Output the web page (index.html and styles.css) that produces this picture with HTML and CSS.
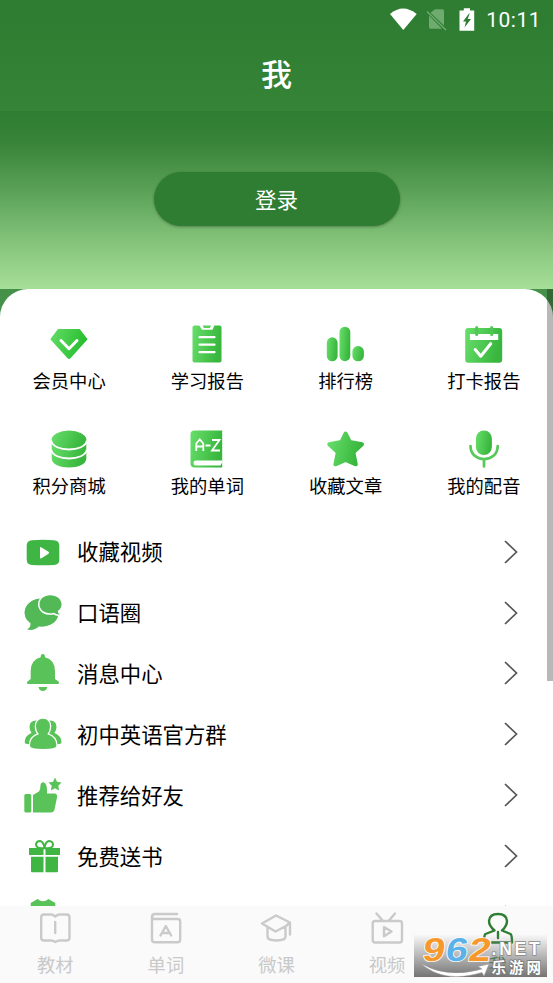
FILE: index.html
```html
<!DOCTYPE html>
<html lang="zh-CN">
<head>
<meta charset="utf-8">
<title>我</title>
<link rel="stylesheet" href="styles.css">
</head>
<body>
<svg class="defs" width="0" height="0" aria-hidden="true">
  <defs>
    <linearGradient id="g" x1="0" y1="0" x2="1" y2="0.25"><stop offset="0" stop-color="#68df6b"/><stop offset="1" stop-color="#38b63d"/></linearGradient>
    <linearGradient id="d" x1="0" y1="0" x2="1" y2="0.25"><stop offset="0" stop-color="#65dd6a"/><stop offset="1" stop-color="#27bd2d"/></linearGradient>
    <linearGradient id="wm" x1="0" y1="0" x2="0" y2="1"><stop offset="0" stop-color="#777" stop-opacity="0"/><stop offset="1" stop-color="#747474"/></linearGradient>
  </defs>
</svg>
<div class="screen">
  <header class="appbar">
    <div class="status">
      <svg width="28" height="24" viewBox="389 6 28 24"><path fill="#fff" d="M390 13Q403 2 416.700 13L403.300 29Z"/></svg>
      <svg class="sim" width="22" height="24" viewBox="426 6 22 24"><path fill="#6fab6f" d="M435 8.300H442.500Q444 8.300 444 10V24.500L430.500 11.800ZM429 14.500L442 27.700H430.500Q429 27.700 429 26Z"/><path stroke="#6fab6f" stroke-width="1.500" d="M427 10.500L446 29"/></svg>
      <svg class="battery" width="16" height="24" viewBox="459.500 6 16 24"><path fill="#fff" d="M460 9.500H464.300V7.300H470.500V9.500H474.700V29.700H460Z"/><path fill="#2e7d32" d="M469.500 12.500L463.500 20.500H466.500L465 26.500L471.500 18H468.200L470.200 12.500Z"/></svg>
      <span class="time">10:11</span>
    </div>
    <h1>我</h1>
  </header>
  <section class="hero"><button class="login">登录</button></section>
  <main class="backdrop">
    <div class="card">
      <div class="grid">
        <div class="cell"><svg viewBox="47.300 322 44 44"><path fill="url(#d)" d="M58.300 329H80L87.900 339.300L71 358Q69.300 360 67.600 358L50.600 339.300Z"/><path class="cut" d="M61.300 340.500L69.300 348.700L77.300 340.500"/></svg><span>会员中心</span></div>
        <div class="cell"><svg viewBox="185.500 322 44 44"><rect x="193" y="325.500" width="29" height="37" rx="2" fill="url(#g)"/><path fill="#fff" d="M199.500 325H215L213 329.800H202.500Z"/><path fill="#5bce5d" d="M203.300 325.500H211.500L210.500 328H204.300Z"/><path class="cut thin" d="M200 337.200H215M200 344.700H215M200 352.200H215"/></svg><span>学习报告</span></div>
        <div class="cell"><svg viewBox="324.200 322 44 44"><rect x="327" y="337.300" width="10.800" height="24" rx="5.400" fill="url(#g)"/><rect x="339.700" y="326.700" width="10.800" height="34.500" rx="5.400" fill="url(#g)"/><rect x="352.600" y="346" width="11.500" height="15.300" rx="5.600" fill="url(#g)"/></svg><span>排行榜</span></div>
        <div class="cell"><svg viewBox="461.800 322 44 44"><rect x="465" y="328" width="37" height="34.700" rx="3" fill="url(#g)"/><rect x="469.700" y="334" width="28.300" height="6" fill="#fff"/><path stroke="#4fc853" stroke-width="3" stroke-linecap="round" d="M476.500 327.500V334.500M491.500 327.500V334.500"/><path class="cut" d="M475 349.500L480.500 356.200L490.500 343.700"/></svg><span>打卡报告</span></div>
        <div class="cell"><svg viewBox="47.300 426.500 44 44"><path fill="url(#g)" d="M52 439V458C52 470 86.600 470 86.600 458V439Z"/><ellipse cx="69.300" cy="439" rx="17.300" ry="9" fill="url(#g)"/><path fill="none" stroke="#fff" stroke-width="1.900" d="M51.500 440C53 452 85.600 452 87.100 440M51.500 449C53 461 85.600 461 87.100 449"/></svg><span>积分商城</span></div>
        <div class="cell"><svg viewBox="185.500 426.500 44 44"><path fill="url(#g)" d="M195 430H222.700V467H195Q191 467 191 463V434Q191 430 195 430Z"/><path fill="#fff" d="M222.700 460H196.500Q194 460 194 462.500T196.500 465H221L222.700 462Z"/><path class="letters" d="M196.800 450.500V443L200.300 438.800L203.800 443V450.500M196.800 446H203.800M206 445H211M212.500 439.500H220L212.500 450H220.500"/></svg><span>我的单词</span></div>
        <div class="cell"><svg viewBox="324 426.500 44 44"><path fill="url(#g)" stroke="url(#g)" stroke-width="4" stroke-linejoin="round" d="M345.600 433L349.800 441.500L362 443.800L353.400 451.800L355.800 463.800L345.600 459.500L335.400 463.800L337.800 451.800L329.200 443.800L341.400 441.500Z"/></svg><span>收藏文章</span></div>
        <div class="cell"><svg viewBox="461.800 426.500 44 44"><rect x="475.700" y="430" width="16" height="24.500" rx="8" fill="url(#g)"/><path fill="none" stroke="#55ca59" stroke-width="2.700" stroke-linecap="round" d="M470.300 445.500C470.300 463 497.500 463 497.500 445.500M483.800 459V466"/></svg><span>我的配音</span></div>
      </div>
      <div class="list">
        <div class="row"><svg class="icon" viewBox="21 529.500 44 44"><path fill="#3fb543" d="M32 539.700Q43 539 54 539.700Q59.300 540.200 59.300 545V559.500Q59.300 564 54 564.500Q43 565 32 564.500Q26.700 564 26.700 559V545Q26.700 540.200 32 539.700Z"/><path fill="#fff" d="M40 547.500Q40 546 41.500 547L48.500 551.300Q49.800 552.200 48.500 553.200L41.500 557.700Q40 558.500 40 557Z"/></svg><span>收藏视频</span><svg class="chev" viewBox="0 0 16 26"><path d="M2 2L13.500 13L2 24"/></svg></div>
        <div class="row"><svg class="icon" viewBox="21 590.200 44 44"><path fill="#53b957" d="M42 598C31 598 24.700 604.500 24.700 612Q24.700 618.500 30.500 622Q31 627 27 628.500Q33 631 39 625.500C48 626.500 57 622 58 615Z"/><ellipse cx="41.500" cy="611.800" rx="16.800" ry="14" fill="#53b957"/><path fill="#53b957" stroke="#fff" stroke-width="3" paint-order="stroke" d="M50.300 594.500C44 594.500 39.500 598.300 39.500 603.500S44 612.500 50.300 612.500Q52 612.500 54 612Q57 614.500 60 613.500Q57.500 612.500 58 610Q61.500 607.500 61.500 603.500C61.500 598.300 56.500 594.500 50.300 594.500Z"/></svg><span>口语圈</span><svg class="chev" viewBox="0 0 16 26"><path d="M2 2L13.500 13L2 24"/></svg></div>
        <div class="row"><svg class="icon" viewBox="21 651 44 44"><path fill="#59c359" d="M42.800 654Q45 654 45 657.300Q55 660 55 671V679L58.500 681.500Q60 684 57.500 684H28.500Q26 684 27.500 681.500L30.700 679V671Q30.700 660 40.700 657.300Q40.700 654 42.800 654ZM38.500 687H47.300Q46.500 691 42.900 691T38.500 687Z"/></svg><span>消息中心</span><svg class="chev" viewBox="0 0 16 26"><path d="M2 2L13.500 13L2 24"/></svg></div>
        <div class="row"><svg class="icon" viewBox="21 712 44 44"><path fill="#59c359" d="M36 720.500Q29.500 720.500 29.500 727Q29.500 730 31.500 733Q25 735.500 24.700 742Q24.700 744.200 29 744.200H57.500Q61.500 744.200 61.500 742Q61 735.500 54.500 733Q56.500 730 56.500 727Q56.500 720.500 50 720.500Z"/><path fill="#59c359" stroke="#fff" stroke-width="2.600" paint-order="stroke" d="M43 718.800C38.500 718.800 36 722 36 726.500Q36 731 39 734.300C33 736 30 740 30 746Q30 749 43.200 749T56.400 746C56.400 740 53 736 47.300 734.300Q50 731 50 726.500C50 722 47.500 718.800 43 718.800Z"/></svg><span>初中英语官方群</span><svg class="chev" viewBox="0 0 16 26"><path d="M2 2L13.500 13L2 24"/></svg></div>
        <div class="row"><svg class="icon" viewBox="21 773.500 44 44"><rect x="24.300" y="794.500" width="7" height="18.500" rx="1.600" fill="#59c359"/><path fill="#59c359" d="M33 795.500L39 792Q40.500 790 40.500 785.500Q41 782.500 43.700 782.700Q47.500 784 47 794H55Q57.500 794.500 57 798L54.500 810Q54 813 50.500 813H33ZM55 778L57 782.300L61.500 783L58.300 786.300L59 791L55 788.800L50.900 791L51.700 786.300L48.500 783L53 782.300Z"/></svg><span>推荐给好友</span><svg class="chev" viewBox="0 0 16 26"><path d="M2 2L13.500 13L2 24"/></svg></div>
        <div class="row"><svg class="icon" viewBox="21 834 44 44"><path fill="#3fb543" d="M29 848H43.500V855H29ZM45.500 848H60V855H45.500ZM31 856.700H43.500V872.300H32Q31 872.300 31 871ZM45.500 856.700H58V871Q58 872.300 57 872.300H45.500Z"/><path fill="none" stroke="#3fb543" stroke-width="2" d="M44.500 848Q36 849 36 844.500Q36.500 841 40 841Q43.500 841.500 44.500 848Q45.500 841.500 49 841Q53 841.500 53 844.500Q53 849 44.500 848Z"/></svg><span>免费送书</span><svg class="chev" viewBox="0 0 16 26"><path d="M2 2L13.500 13L2 24"/></svg></div>
        <div class="row"><svg class="icon" viewBox="21 895 44 44"><path fill="#59c359" d="M30.700 903L37.500 899Q43 903.500 48.500 899L55.300 903V925H30.700Z"/></svg><span></span><svg class="chev" viewBox="0 0 16 26"><path d="M2 2L13.500 13L2 24"/></svg></div>
      </div>
    </div>
    <div class="scrollbar"></div>
  </main>
  <nav class="tabs">
    <div class="tab"><svg viewBox="37 910 36 36"><path d="M44 914.500H51Q53 914.500 55.300 916.500Q57.500 914.500 59.500 914.500H66.500Q69.500 914.500 69.500 917.500V938Q69.500 940.500 66.500 940.500H59.500Q57.500 940.500 55.300 942Q53 940.500 51 940.500H44Q41.200 940.500 41.200 938V917.500Q41.200 914.500 44 914.500ZM55.200 922V933"/></svg><span>教材</span></div>
    <div class="tab"><svg viewBox="148 910 36 36"><path d="M177 914H155Q152 914 152 917V939.500Q152 942.300 155 942.300H177.500Q180.200 942.300 180.200 939.500V921.500Q180.200 919 177.500 919H154.500Q152 919 152 917M160.500 935.500L165.800 926L171.200 935.500M162 933H169.500"/></svg><span>单词</span></div>
    <div class="tab"><svg viewBox="258.500 910 36 36"><path d="M276.500 915.500L290.500 922.500L286.500 926Q276 931.500 276 931.500L262.500 923.500ZM268 927V936.500Q268 940.500 277 940.500T286 936.500V926.500M290.500 923V934.500"/></svg><span>微课</span></div>
    <div class="tab"><svg viewBox="369 910 36 36"><path d="M375 921H399.500Q402 921 402 923.500V940Q402 942.500 399.500 942.500H375Q372.700 942.500 372.700 940V923.500Q372.700 921 375 921ZM376.500 913.500L382.500 920.500M395 913.500L389 920.500M384 927V936.300L391.500 931.500Z"/></svg><span>视频</span></div>
    <div class="tab active"><svg viewBox="479.500 910 36 36"><path d="M494 930.500Q488.500 926 488.500 921Q489 914 497.500 914T506.500 921Q506.500 926 501.500 930.500L510 934Q511.500 935 511.500 942.500H483.500Q483.500 935 485 934ZM497.500 932V938"/></svg><span>我</span></div>
    <svg class="watermark" viewBox="414 934 133 43">
      <rect x="414" y="934" width="133" height="43" fill="url(#wm)"/>
      <path fill="#fff" stroke="#999" stroke-width=".5" d="M421 963.500Q447 979 482 969L478 966.500L489 964L484 976L482 972.500Q444 984 421 963.500Z"/>
      <g class="num" transform="translate(421.500 960.500) skewX(-9)"><text textLength="22" lengthAdjust="spacingAndGlyphs" fill="#f7982c">9</text><text x="23" textLength="22" lengthAdjust="spacingAndGlyphs" fill="#5ab2e8">6</text><text x="46" textLength="22" lengthAdjust="spacingAndGlyphs" fill="#f7982c">2</text></g>
      <text class="net" x="491.500" y="955">.NET</text>
      <text class="site" x="491.500" y="973">乐游网</text>
    </svg>
  </nav>
</div>
</body>
</html>
```
FILE: styles.css
```css
* { box-sizing: border-box; }
body {
  margin: 0;
  font-family: "Noto Sans CJK SC", sans-serif;
  color: #000;
}
svg { display: block; flex: none; }
.defs { position: absolute; }
.screen {
  width: 553px;
  height: 983px;
  display: flex;
  flex-direction: column;
  overflow: hidden;
  background: #fff;
}
.appbar {
  flex: none;
  height: 111px;
  background: linear-gradient(#2e7d32 20%, #368436);
  color: #fff;
}
.status {
  height: 37px;
  display: flex;
  align-items: center;
  justify-content: flex-end;
  padding-right: 12px;
}
.sim { margin-left: 9px; }
.battery { margin-left: 11px; }
.time {
  margin: 2px 0 0 11px;
  font: 400 21px/24px Roboto, sans-serif;
  letter-spacing: .5px;
}
h1 {
  margin: 0;
  font-size: 31px;
  line-height: 72px;
  font-weight: 500;
  text-align: center;
}
.hero {
  flex: none;
  height: 178px;
  padding-top: 61px;
  background: linear-gradient(#2e7d32 0%, #388438 18%, #4b9449 33%, #64aa60 52%, #8bc87f 78%, #a6df98 100%);
}
.login {
  display: block;
  width: 246px;
  height: 54px;
  margin: 0 auto;
  padding: 0;
  border: 0;
  border-radius: 27px;
  background: #2e7d32;
  color: #fff;
  font: 21.500px/52px "Noto Sans CJK SC", sans-serif;
  box-shadow: 0 1px 3px rgba(0, 0, 0, .3);
}
.backdrop {
  position: relative;
  flex: 1;
  min-height: 0;
  overflow: hidden;
  background: #46914a;
}
.card {
  padding-top: 29px;
  border-radius: 28px 28px 0 0;
  background: #fff;
}
.scrollbar {
  position: absolute;
  top: 0;
  right: 0;
  width: 6px;
  height: 392px;
  background: rgba(0, 0, 0, .28);
}
.grid {
  display: grid;
  grid-template-columns: repeat(4, 1fr);
  grid-auto-rows: 104.500px;
}
.cell {
  display: flex;
  flex-direction: column;
  align-items: center;
  padding-top: 4px;
  font-size: 18.300px;
  line-height: 28px;
}
.cell svg { width: 44px; height: 44px; }
.cell .cut {
  fill: none;
  stroke: #fff;
  stroke-width: 3;
  stroke-linecap: round;
  stroke-linejoin: round;
}
.cell .cut.thin { stroke-width: 2.200; }
.letters { fill: none; stroke: #fff; stroke-width: 1.800; }
.list { margin-top: -5.800px; }
.row {
  height: 60.900px;
  display: flex;
  align-items: center;
  padding: 0 34px 0 21px;
  font-size: 21.400px;
}
.row .icon { width: 44px; height: 44px; }
.row span { flex: 1; margin: -2px 0 0 12px; }
.chev { width: 16px; height: 26px; fill: none; stroke: #555; stroke-width: 1.700; }
.tabs {
  position: relative;
  flex: none;
  height: 77px;
  display: flex;
  background: #fafafa;
}
.tab {
  flex: 1;
  display: flex;
  flex-direction: column;
  align-items: center;
  padding-top: 4px;
  font-size: 18.300px;
  line-height: 36px;
  color: #c9c9c9;
}
.tab svg:first-child {
  width: 36px;
  height: 36px;
  fill: none;
  stroke: #cacaca;
  stroke-width: 2.400;
  stroke-linecap: round;
  stroke-linejoin: round;
}
.tab.active { color: #2e7d32; }
.tab.active svg:first-child { stroke: #2e7d32; }
.watermark {
  position: absolute;
  right: 6px;
  bottom: 6px;
  width: 133px;
  height: 43px;
  overflow: visible;
}
.num { font: bold 33px "Liberation Sans", sans-serif; stroke: #fff; stroke-width: 1.500; paint-order: stroke; }
.net { font: bold 17.500px "Liberation Sans", sans-serif; letter-spacing: 2.800px; fill: #fff; stroke: #888; stroke-width: 1.500; paint-order: stroke; }
.site { font: bold 14.500px "Noto Sans CJK SC", sans-serif; letter-spacing: 3px; fill: #fff; stroke: #777; stroke-width: 1.500; paint-order: stroke; }
```
